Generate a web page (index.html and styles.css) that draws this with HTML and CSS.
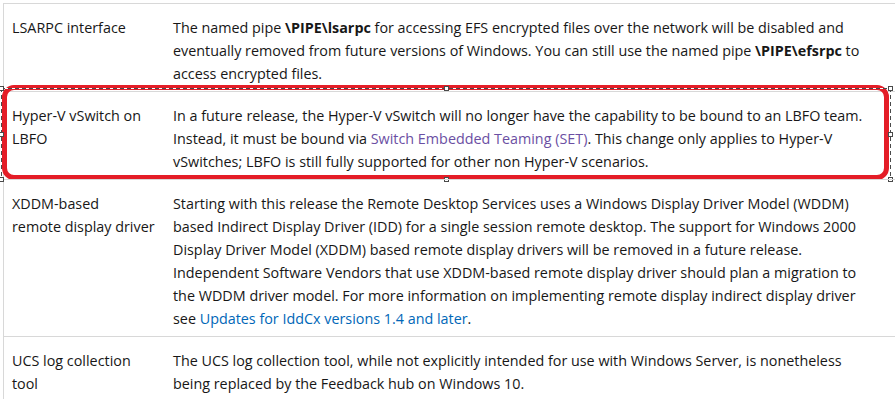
FILE: index.html
```html
<!DOCTYPE html>
<html lang="en">
<head>
<meta charset="utf-8">
<title>Deprecated features</title>
<link rel="stylesheet" href="styles.css">
</head>
<body>
<div class="table">
  <div class="row">
    <div class="feat">LSARPC interface</div>
    <div class="desc">The named pipe <b>\PIPE\lsarpc</b> for accessing EFS encrypted files over the network will be disabled and<br>eventually removed from future versions of Windows. You can still use the named pipe <b>\PIPE\efsrpc</b> to<br>access encrypted files.</div>
  </div>
  <div class="row">
    <div class="feat">Hyper-V vSwitch on<br>LBFO</div>
    <div class="desc">In a future release, the Hyper-V vSwitch will no longer have the capability to be bound to an LBFO team.<br>Instead, it must be bound via <a class="visited" href="#">Switch Embedded Teaming (SET)</a>. This change only applies to Hyper-V<br>vSwitches; LBFO is still fully supported for other non Hyper-V scenarios.</div>
    <div class="highlight"></div>
    <div class="selection">
      <span class="handle tl"></span><span class="handle tm"></span><span class="handle tr"></span>
      <span class="handle ml"></span><span class="handle mr"></span>
      <span class="handle bl"></span><span class="handle bm"></span><span class="handle br"></span>
    </div>
  </div>
  <div class="row">
    <div class="feat">XDDM-based<br>remote display driver</div>
    <div class="desc">Starting with this release the Remote Desktop Services uses a Windows Display Driver Model (WDDM)<br>based Indirect Display Driver (IDD) for a single session remote desktop. The support for Windows 2000<br>Display Driver Model (XDDM) based remote display drivers will be removed in a future release.<br>Independent Software Vendors that use XDDM-based remote display driver should plan a migration to<br>the WDDM driver model. For more information on implementing remote display indirect display driver<br>see <a href="#">Updates for IddCx versions 1.4 and later</a>.</div>
  </div>
  <div class="row">
    <div class="feat">UCS log collection<br>tool</div>
    <div class="desc">The UCS log collection tool, while not explicitly intended for use with Windows Server, is nonetheless<br>being replaced by the Feedback hub on Windows 10.</div>
  </div>
</div>
</body>
</html>
```

FILE: styles.css
```css
html, body {
  margin: 0;
  padding: 0;
  background: #ffffff;
  overflow: hidden;
}

body {
  font-family: "Open Sans", "Noto Sans", sans-serif;
  font-size: 14.35px;
  line-height: 23px;
  color: #171717;
}

.table {
  margin: 3px 0 0 3px;
  border-left: 1px solid #d8d8d8;
}

.row {
  position: relative;
  display: grid;
  grid-template-columns: 161px 1fr;
  border-top: 1px solid #d8d8d8;
  padding: 12px 0 6px;
}

.feat, .desc {
  padding-left: 8px;
  white-space: nowrap;
}

.desc b {
  font-weight: 700;
}

a {
  color: #0067b8;
  text-decoration: none;
}

a.visited {
  color: #6b4fa3;
}

.highlight {
  position: absolute;
  left: -2px;
  right: 6px;
  top: -7px;
  bottom: -1px;
  border: 5px solid #e41d27;
  border-radius: 12px;
  pointer-events: none;
}

.selection {
  position: absolute;
  left: -3px;
  right: 4px;
  top: -4px;
  bottom: -1px;
  pointer-events: none;
  background:
    repeating-linear-gradient(90deg, #4a4a4a 0 4px, #ffffff 4px 7px) left top / 100% 1px no-repeat,
    repeating-linear-gradient(90deg, #4a4a4a 0 4px, #ffffff 4px 7px) left bottom / 100% 1px no-repeat,
    repeating-linear-gradient(180deg, #4a4a4a 0 4px, #ffffff 4px 7px) left top / 1px 100% no-repeat,
    repeating-linear-gradient(180deg, #4a4a4a 0 4px, #ffffff 4px 7px) right top / 1px 100% no-repeat;
}

.handle {
  position: absolute;
  width: 3px;
  height: 3px;
  background: #ffffff;
  border: 1px solid #4a4a4a;
}

.tl { left: -2px; top: -2px; }
.tm { left: calc(50% - 2px); top: -2px; }
.tr { right: -2px; top: -2px; }
.ml { left: -2px; top: calc(50% - 2px); }
.mr { right: -2px; top: calc(50% - 2px); }
.bl { left: -2px; bottom: -2px; }
.bm { left: calc(50% - 2px); bottom: -2px; }
.br { right: -2px; bottom: -2px; }
```
